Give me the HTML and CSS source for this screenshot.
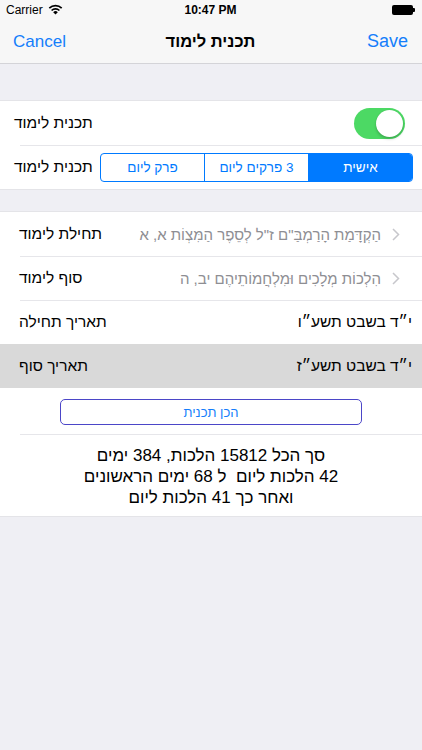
FILE: index.html
```html
<!DOCTYPE html>
<html lang="he">
<head>
<meta charset="utf-8">
<title>תכנית לימוד</title>
<link rel="stylesheet" href="styles.css">
</head>
<body>
<div class="screen">
  <div class="status">
    <div class="st-left">
      <span>Carrier</span>
      <svg class="wifi" width="15" height="11" viewBox="0 0 15 11">
        <path d="M7.5 10.6 L5.2 8.2 A3.3 3.3 0 0 1 9.8 8.2 Z" fill="#000"/>
        <path d="M3.6 6.5 A5.5 5.5 0 0 1 11.4 6.5" fill="none" stroke="#000" stroke-width="1.7"/>
        <path d="M1.3 4.2 A8.8 8.8 0 0 1 13.7 4.2" fill="none" stroke="#000" stroke-width="1.7"/>
      </svg>
    </div>
    <div class="st-time">10:47 PM</div>
    <div class="st-right"><span class="battery"></span><span class="nub"></span></div>
  </div>
  <div class="nav">
    <span class="nav-btn">Cancel</span>
    <span class="nav-title" dir="rtl">תכנית לימוד</span>
    <span class="nav-btn end">Save</span>
  </div>

  <div class="gap gap-top"></div>

  <section class="group">
    <div class="row row-a">
      <span class="label" dir="rtl">תכנית לימוד</span>
      <span class="switch"><span class="knob"></span></span>
    </div>
    <div class="row row-a seg-row sep">
      <span class="label" dir="rtl">תכנית לימוד</span>
      <div class="seg">
        <span class="seg-item" dir="rtl">פרק ליום</span>
        <span class="seg-item" dir="rtl">3 פרקים ליום</span>
        <span class="seg-item on" dir="rtl">אישית</span>
      </div>
    </div>
  </section>

  <div class="gap gap-mid"></div>

  <section class="group">
    <div class="row row-b">
      <span class="label" dir="rtl">תחילת לימוד</span>
      <span class="detail">
        <span class="value" dir="rtl">הַקְדָּמַת הָרַמְבַּ"ם ז"ל לְסֵפֶר הַמִּצְוֹת א, א</span>
        <svg class="chev" width="8" height="13" viewBox="0 0 8 13"><path d="M1 1 L6.5 6.5 L1 12" fill="none" stroke="#c7c7cc" stroke-width="1.5"/></svg>
      </span>
    </div>
    <div class="row row-b sep">
      <span class="label" dir="rtl">סוף לימוד</span>
      <span class="detail">
        <span class="value" dir="rtl">הִלְכוֹת מְלָכִים וּמִלְחֲמוֹתֵיהֶם יב, ה</span>
        <svg class="chev" width="8" height="13" viewBox="0 0 8 13"><path d="M1 1 L6.5 6.5 L1 12" fill="none" stroke="#c7c7cc" stroke-width="1.5"/></svg>
      </span>
    </div>
    <div class="row row-b date-row sep">
      <span class="label" dir="rtl">תאריך תחילה</span>
      <span class="date" dir="rtl">י״ד בשבט תשע״ו</span>
    </div>
    <div class="row row-b date-row selected">
      <span class="label" dir="rtl">תאריך סוף</span>
      <span class="date" dir="rtl">י״ד בשבט תשע״ז</span>
    </div>
    <div class="btn-row">
      <span class="btn" dir="rtl">הכן תכנית</span>
    </div>
    <div class="summary sep" dir="rtl">
      <div>סך הכל 15812 הלכות, 384 ימים</div>
      <div>42 הלכות ליום&nbsp; ל 68 ימים הראשונים</div>
      <div>ואחר כך 41 הלכות ליום</div>
    </div>
  </section>
</div>
</body>
</html>
```

FILE: styles.css
```css
* { box-sizing: border-box; }
html, body { margin: 0; padding: 0; }
body {
  background: #efeff4;
  font-family: "Liberation Sans", Arial, sans-serif;
  color: #000;
}
.screen {
  width: 422px;
  height: 750px;
  overflow: hidden;
  background: #efeff4;
}
.status {
  height: 20px;
  background: #f7f7f7;
  display: grid;
  grid-template-columns: 1fr auto 1fr;
  align-items: center;
  padding: 0 7px 0 6px;
  font-size: 12px;
}
.st-left { display: flex; align-items: center; gap: 5px; }
.wifi { display: block; margin-top: -1px; }
.st-time { font-weight: bold; font-size: 12px; }
.st-right { display: flex; justify-content: flex-end; align-items: center; }
.battery {
  width: 21px;
  height: 10px;
  background: #000;
  border-radius: 2px;
}
.nub {
  width: 2px;
  height: 4px;
  background: #000;
  border-radius: 0 1px 1px 0;
}
.nav {
  height: 44px;
  background: #f7f7f7;
  border-bottom: 1px solid #d4d4d8;
  display: grid;
  grid-template-columns: 1fr auto 1fr;
  align-items: center;
  padding: 0 14px 0 13px;
}
.nav-btn { color: #147efb; font-size: 17px; }
.nav-btn.end { justify-self: end; font-size: 18px; }
.nav-title { font-weight: bold; font-size: 16.5px; }
.gap-top { height: 36px; }
.gap-mid { height: 21px; }
.group {
  background: #fff;
  border-top: 1px solid #e4e4e8;
  border-bottom: 1px solid #e4e4e8;
}
.row {
  display: flex;
  align-items: center;
  justify-content: space-between;
  height: 44px;
}
.sep {
  background-image: linear-gradient(#e6e6ea, #e6e6ea);
  background-repeat: no-repeat;
  background-position: 20px 0;
  background-size: calc(100% - 20px) 1px;
}
.row-a { padding: 0 17px 0 14px; }
.seg-row { padding-right: 9px; }
.label { font-size: 15.5px; white-space: nowrap; flex-shrink: 0; }
.switch {
  width: 51px;
  height: 31px;
  border-radius: 16px;
  background: #4cd964;
  display: flex;
  align-items: center;
  justify-content: flex-end;
  padding: 2px;
}
.knob {
  width: 27px;
  height: 27px;
  border-radius: 50%;
  background: #fff;
  box-shadow: 0 2px 3px rgba(0,0,0,0.2), 0 0 1px rgba(0,0,0,0.15);
}
.seg {
  display: flex;
  width: 313px;
  height: 29px;
  border: 1px solid #007aff;
  border-radius: 4px;
  overflow: hidden;
}
.seg-item {
  flex: 1;
  display: flex;
  align-items: center;
  justify-content: center;
  color: #007aff;
  font-size: 13.5px;
}
.seg-item + .seg-item { border-left: 1px solid #007aff; }
.seg-item.on { background: #007aff; color: #fff; }
.row-b { padding: 0 14px 0 19px; }
.detail { display: flex; align-items: center; gap: 11px; padding-right: 8px; }
.value { color: #8e8e93; font-size: 15px; white-space: nowrap; }
.chev { display: block; }
.date-row { padding-right: 10px; }
.date { font-size: 15.5px; }
.selected { background: #d9d9d9; }
.btn-row {
  display: flex;
  justify-content: center;
  padding: 11px 20px 9px 0;
}
.btn {
  width: 302px;
  height: 26px;
  margin-left: 20px;
  border: 1.5px solid #4b46c8;
  border-radius: 5px;
  color: #147efb;
  font-size: 13px;
  display: flex;
  align-items: center;
  justify-content: center;
}
.summary {
  text-align: center;
  font-size: 17px;
  line-height: 21px;
  padding: 11px 0 8px;
}
```
